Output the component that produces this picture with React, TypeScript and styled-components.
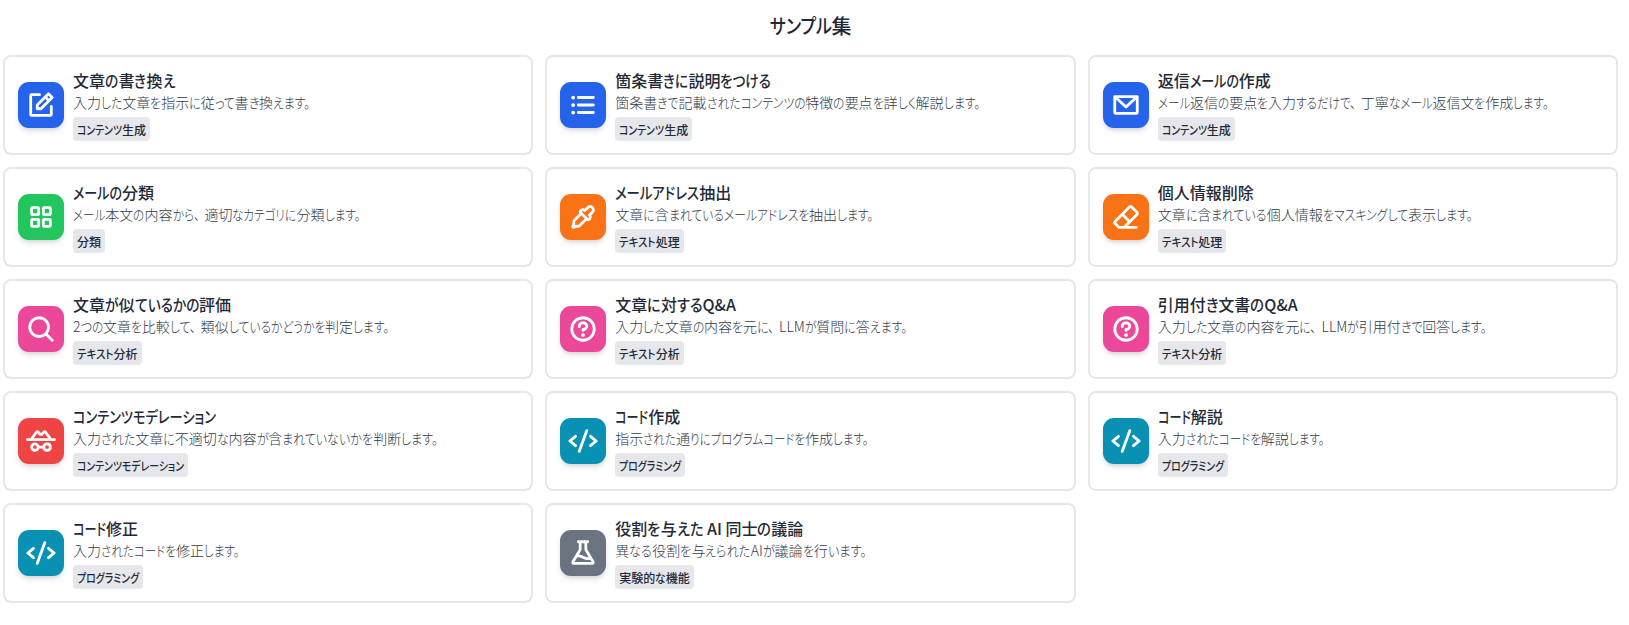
import React, { useLayoutEffect, useRef, useState } from 'react';
import type { IconType } from 'react-icons';
import styled, { createGlobalStyle } from 'styled-components';
import {
  PiCodeBold,
  PiDetectiveBold,
  PiEnvelopeSimpleBold,
  PiEraserBold,
  PiEyedropperBold,
  PiFlaskBold,
  PiListBulletsBold,
  PiMagnifyingGlassBold,
  PiNotePencilBold,
  PiQuestionBold,
  PiSquaresFourBold,
} from 'react-icons/pi';

const GlobalStyle = createGlobalStyle`
  *, *::before, *::after { box-sizing: border-box; }
  body {
    margin: 0;
    background: #fff;
    color: #1f2937;
    font-family: 'Noto Sans CJK JP', sans-serif;
    font-feature-settings: 'palt';
  }
`;

const Page = styled.main`
  width: 1615px;
  margin-left: 3px;
  padding-top: 12px;
`;

const Heading = styled.h1`
  margin: 0 0 15px;
  font-size: 20px;
  font-weight: 500;
  line-height: 28px;
  text-align: center;
`;

const Grid = styled.div`
  display: grid;
  grid-template-columns: repeat(3, minmax(0, 1fr));
  gap: 12px;
`;

const Card = styled.article`
  display: flex;
  align-items: center;
  gap: 9px;
  height: 100px;
  padding: 0 13px;
  border: 2px solid #e5e7eb;
  border-radius: 8px;
`;

const IconTile = styled.div<{ $color: string }>`
  display: flex;
  flex: none;
  align-items: center;
  justify-content: center;
  width: 46px;
  height: 46px;
  border-radius: 11px;
  background: ${(p) => p.$color};
  color: #fff;
  font-size: 30px;
  box-shadow: 0 4px 6px -1px rgba(0, 0, 0, 0.12), 0 2px 4px -2px rgba(0, 0, 0, 0.12);
`;

const Body = styled.div`
  min-width: 0;
  padding-bottom: 1px;
`;

const Title = styled.h2`
  margin: 0;
  font-size: 16px;
  font-weight: 500;
  line-height: 24px;
`;

const Description = styled.p`
  margin: 0 0 5px;
  color: #2f3a48;
  font-size: 14px;
  font-weight: 300;
  line-height: 20px;
`;

const Tag = styled.span`
  display: block;
  width: fit-content;
  height: 24px;
  padding: 0 4px;
  border-radius: 4px;
  background: #e5e7eb;
  font-size: 12px;
  font-weight: 500;
  line-height: 25px;
`;

const Line = styled.span`
  display: inline-block;
  white-space: pre;
`;

const Kana = styled.span<{ $pause: boolean }>`
  display: inline-block;
  padding-right: ${(p) => (p.$pause ? 6 : 0)}px;
  transform-origin: left center;
`;

const KANA = /([\u3040-\u30ff、。]+)/;

/* Condenses the kana of a line, leaving the kanji at full width, so the line takes the given width. */
function Condensed({ text, width }: { text: string; width: number }) {
  const line = useRef<HTMLSpanElement>(null);
  const [fit, setFit] = useState<{ scale: number; widths: number[] } | null>(null);

  useLayoutEffect(() => {
    const el = line.current;
    if (!el || fit) return;
    const total = el.getBoundingClientRect().width;
    const widths = Array.from(el.children, (c) => c.getBoundingClientRect().width);
    const kana = widths.reduce((a, b) => a + b, 0);
    if (kana > 0) setFit({ scale: (width - total + kana) / kana, widths });
  }, [fit, width]);

  return (
    <Line ref={line}>
      {text.split(KANA).map((run, i) => {
        if (i % 2 === 0) return run;
        const style = fit
          ? {
              transform: `scaleX(${fit.scale})`,
              marginRight: (fit.scale - 1) * fit.widths[(i - 1) / 2],
            }
          : undefined;
        return (
          <Kana key={i} $pause={run.endsWith('、')} style={style}>
            {run}
          </Kana>
        );
      })}
    </Line>
  );
}

type Label = [text: string, width: number];

interface Sample {
  icon: IconType;
  color: string;
  title: Label;
  description: Label;
  tag: Label;
}

const BLUE = '#2563eb';
const GREEN = '#22c55e';
const ORANGE = '#f97316';
const PINK = '#ec4899';
const RED = '#ef4444';
const CYAN = '#0891b2';
const GRAY = '#6b7280';

const GENERATION: Label = ['コンテンツ生成', 69];
const CLASSIFY: Label = ['分類', 24];
const PROCESSING: Label = ['テキスト処理', 60.5];
const ANALYSIS: Label = ['テキスト分析', 60.5];
const MODERATION: Label = ['コンテンツモデレーション', 107];
const PROGRAMMING: Label = ['プログラミング', 62];
const EXPERIMENTAL: Label = ['実験的な機能', 70.5];

const samples: Sample[] = [
  { icon: PiNotePencilBold, color: BLUE, title: ['文章の書き換え', 102], description: ['入力した文章を指示に従って書き換えます。', 237], tag: GENERATION },
  { icon: PiListBulletsBold, color: BLUE, title: ['箇条書きに説明をつける', 156], description: ['箇条書きで記載されたコンテンツの特徴の要点を詳しく解説します。', 364.5], tag: GENERATION },
  { icon: PiEnvelopeSimpleBold, color: BLUE, title: ['返信メールの作成', 113], description: ['メール返信の要点を入力するだけで、丁寧なメール返信文を作成します。', 391], tag: GENERATION },
  { icon: PiSquaresFourBold, color: GREEN, title: ['メールの分類', 81], description: ['メール本文の内容から、適切なカテゴリに分類します。', 287], tag: CLASSIFY },
  { icon: PiEyedropperBold, color: ORANGE, title: ['メールアドレス抽出', 116], description: ['文章に含まれているメールアドレスを抽出します。', 258], tag: PROCESSING },
  { icon: PiEraserBold, color: ORANGE, title: ['個人情報削除', 96], description: ['文章に含まれている個人情報をマスキングして表示します。', 315], tag: PROCESSING },
  { icon: PiMagnifyingGlassBold, color: PINK, title: ['文章が似ているかの評価', 158], description: ['2つの文章を比較して、類似しているかどうかを判定します。', 316], tag: ANALYSIS },
  { icon: PiQuestionBold, color: PINK, title: ['文章に対するQ&A', 120.5], description: ['入力した文章の内容を元に、LLMが質問に答えます。', 291.5], tag: ANALYSIS },
  { icon: PiQuestionBold, color: PINK, title: ['引用付き文書のQ&A', 140], description: ['入力した文章の内容を元に、LLMが引用付きで回答します。', 329], tag: ANALYSIS },
  { icon: PiDetectiveBold, color: RED, title: ['コンテンツモデレーション', 143], description: ['入力された文章に不適切な内容が含まれていないかを判断します。', 365], tag: MODERATION },
  { icon: PiCodeBold, color: CYAN, title: ['コード作成', 65], description: ['指示された通りにプログラムコードを作成します。', 253], tag: PROGRAMMING },
  { icon: PiCodeBold, color: CYAN, title: ['コード解説', 65], description: ['入力されたコードを解説します。', 166.5], tag: PROGRAMMING },
  { icon: PiCodeBold, color: CYAN, title: ['コード修正', 65], description: ['入力されたコードを修正します。', 166.5], tag: PROGRAMMING },
  { icon: PiFlaskBold, color: GRAY, title: ['役割を与えた AI 同士の議論', 188], description: ['異なる役割を与えられたAIが議論を行います。', 251], tag: EXPERIMENTAL },
];

function SampleCard({ icon: Icon, color, title, description, tag }: Sample) {
  return (
    <Card>
      <IconTile $color={color}>
        <Icon />
      </IconTile>
      <Body>
        <Title>
          <Condensed text={title[0]} width={title[1]} />
        </Title>
        <Description>
          <Condensed text={description[0]} width={description[1]} />
        </Description>
        <Tag>
          <Condensed text={tag[0]} width={tag[1]} />
        </Tag>
      </Body>
    </Card>
  );
}

export default function App() {
  return (
    <>
      <GlobalStyle />
      <Page>
        <Heading>
          <Condensed text="サンプル集" width={82} />
        </Heading>
        <Grid>
          {samples.map((s) => (
            <SampleCard key={s.title[0]} {...s} />
          ))}
        </Grid>
      </Page>
    </>
  );
}
